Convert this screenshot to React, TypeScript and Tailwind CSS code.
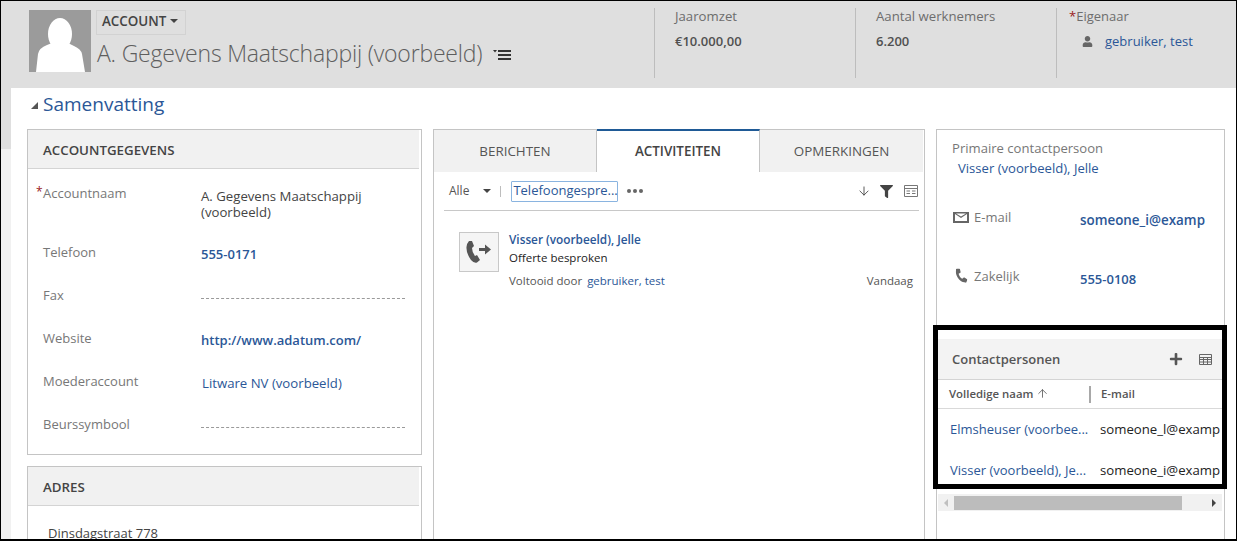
import { ArrowDown, ArrowUp } from 'lucide-react';
import { FaFilter, FaPhone, FaPlus, FaUser } from 'react-icons/fa';

const fields = [
  { label: 'Telefoon', value: '555-0171', kind: 'bold' },
  { label: 'Fax', value: '', kind: 'empty' },
  { label: 'Website', value: 'http://www.adatum.com/', kind: 'bold' },
  { label: 'Moederaccount', value: 'Litware NV (voorbeeld)', kind: 'link' },
  { label: 'Beurssymbool', value: '', kind: 'empty' },
];

function Caret({ className }: { className: string }) {
  return <span className={`inline-block w-0 h-0 border-x-[4px] border-x-transparent border-t-[4px] ${className}`} />;
}

function Stat({ label, value }: { label: string; value: string }) {
  return (
    <div className="w-[201px] h-[70px] border-l border-[#bdbdbd] pl-5 shrink-0">
      <div className="text-[13.2px] leading-[17px] text-[#6d6d6d]">{label}</div>
      <div className="text-[13px] leading-[17px] mt-2 font-semibold text-[#505050]">{value}</div>
    </div>
  );
}

export default function App() {
  return (
    <div className="relative w-[1237px] h-[541px] overflow-hidden border border-black border-b-2 bg-[#f1f1f1] font-['Open_Sans','Liberation_Sans',sans-serif]">
      {/* Kop */}
      <header className="h-[87px] bg-[#dfdfdf] flex pl-[28px] pt-[9px]">
        <div className="w-[62px] h-[62px] bg-[#9b9b9b] shrink-0 overflow-hidden">
          <svg viewBox="0 0 62 62" className="w-full h-full" fill="#ffffff">
            <ellipse cx="31" cy="24" rx="12" ry="16" />
            <path d="M7 62 L9 44 Q10 38 18 35 L23 33 Q31 44 39 33 L45 36 Q52 39 53 44 L56 62 Z" />
          </svg>
        </div>
        <div className="ml-[5px] w-[558px] shrink-0">
          <div className="w-[90px] h-[25px] pb-[2px] border border-[#d2d2d2] flex items-center pl-[5px] gap-[4px] text-[13.4px] font-semibold text-[#444444]">
            ACCOUNT <Caret className="border-t-[#444444] mb-[2px]" />
          </div>
          <div className="flex items-center mt-[2px] ml-[1px]">
            <span className="text-[23px] leading-[32px] font-light text-[#5e5e5e] whitespace-nowrap tracking-[-0.2px]">A. Gegevens Maatschappij (voorbeeld)</span>
            <svg viewBox="0 0 18 12" className="w-[18px] h-[12px] ml-[11px] mt-[3px]" fill="#333333">
              <path d="M0 1h4L2 3.5Z" />
              <rect x="5" y="1" width="13" height="2" />
              <rect x="5" y="5" width="13" height="2" />
              <rect x="5" y="9" width="13" height="2" />
            </svg>
          </div>
        </div>
        <div className="flex mt-[-2px]">
          <Stat label="Jaaromzet" value="€10.000,00" />
          <Stat label="Aantal werknemers" value="6.200" />
          <div className="w-[170px] h-[70px] border-l border-[#bdbdbd] pl-3">
            <div className="text-[13px] leading-[17px] text-[#6d6d6d]"><span className="text-[#9a1c1c]">*</span>Eigenaar</div>
            <div className="flex items-center mt-2 ml-[13px]">
              <FaUser size={11} className="text-[#666666]" />
              <span className="ml-[12px] text-[13px] leading-[17px] text-[#2b5797]">gebruiker, test</span>
            </div>
          </div>
        </div>
      </header>

      <main className="relative ml-[10px] h-[452px] bg-white pl-[16px]">
        <div className="flex items-center h-[32px] pb-[1px] ml-[4px]">
          <span className="w-0 h-0 border-l-[7px] border-l-transparent border-b-[7px] border-b-[#555555] mt-[3px]" />
          <h1 className="ml-[5px] text-[19px] leading-[28px] text-[#2b5797]">Samenvatting</h1>
        </div>

        <div className="flex mt-[9px]">
          {/* Linkerkolom */}
          <div className="w-[395px] shrink-0">
            <section className="h-[326px] border border-[#c4c4c4]">
              <div className="h-[39px] bg-[#f1f1f1] border-b border-[#d4d4d4] mr-[2px] pl-[15px] pt-[3px] flex items-center text-[13.3px] font-semibold text-[#444444]">ACCOUNTGEGEVENS</div>
              <div className="relative flex h-[50px] pt-[16px] pl-[15px]">
                <span className="absolute left-[8px] top-[14px] text-[12px] text-[#9a1c1c]">*</span>
                <span className="w-[158px] shrink-0 text-[13px] leading-[17px] text-[#777777]">Accountnaam</span>
                <span className="w-[190px] mt-[3px] text-[13.2px] leading-[16px] text-[#444444]">A. Gegevens Maatschappij (voorbeeld)</span>
              </div>
              <div className="pt-[15px]">
                {fields.map(f => (
                  <div key={f.label} className="flex h-[43px] pl-[15px] pt-[10px]">
                    <span className="w-[158px] shrink-0 text-[13px] leading-[17px] text-[#777777]">{f.label}</span>
                    {f.kind === 'empty' && <span className="w-[204px] h-[12px] border-b border-dashed border-[#9a9a9a]" />}
                    {f.kind === 'bold' && <span className="mt-[2px] text-[13px] leading-[17px] font-semibold text-[#2b5797]">{f.value}</span>}
                    {f.kind === 'link' && <span className="mt-[2px] ml-[1px] text-[13.2px] leading-[17px] text-[#2b5797]">{f.value}</span>}
                  </div>
                ))}
              </div>
            </section>
            <section className="mt-[11px] h-[100px] border border-[#c4c4c4]">
              <div className="h-[39px] bg-[#f1f1f1] border-b border-[#d4d4d4] mr-[2px] pl-[15px] pt-[3px] flex items-center text-[13.3px] font-semibold text-[#444444]">ADRES</div>
              <div className="mt-[19px] ml-[20px] text-[13px] leading-[17px] text-[#444444]">Dinsdagstraat 778</div>
            </section>
          </div>

          {/* Middenkolom */}
          <section className="ml-[11px] w-[492px] h-[420px] shrink-0 border border-[#c4c4c4]">
            <div className="flex h-[42px] bg-[#f1f1f1] mr-[1px] text-[13.4px] text-[#555555]">
              <div className="w-[163px] border-r border-[#c4c4c4] flex items-center justify-center">BERICHTEN</div>
              <div className="w-[163px] -mt-px h-[43px] bg-white border-t-[2px] border-t-[#1f5a96] border-r border-r-[#c4c4c4] flex items-center justify-center font-semibold text-[#444444]">ACTIVITEITEN</div>
              <div className="flex-1 flex items-center justify-center">OPMERKINGEN</div>
            </div>
            <div className="ml-[10px] mr-[5px] h-[39px] border-b border-[#c8c8c8] flex items-center">
              <span className="ml-[5px] text-[12px] text-[#555555]">Alle</span>
              <Caret className="ml-[14px] border-t-[#444444] border-x-[3px] border-t-[3px]" />
              <span className="ml-[9px] w-px h-[11px] bg-[#bdbdbd]" />
              <span className="ml-[10px] w-[107px] h-[21px] border border-[#8ab4e0] rounded-[1px] text-[13px] leading-[16px] text-[#2b5797] whitespace-nowrap overflow-hidden pl-px">Telefoongespre...</span>
              <span className="ml-[9px] flex gap-[2px]">
                <span className="w-[4px] h-[4px] rounded-full bg-[#666666]" />
                <span className="w-[4px] h-[4px] rounded-full bg-[#666666]" />
                <span className="w-[4px] h-[4px] rounded-full bg-[#666666]" />
              </span>
              <ArrowDown size={14} strokeWidth={1.5} className="ml-auto text-[#444444]" />
              <FaFilter size={13} className="ml-[9px] text-[#444444]" />
              <svg viewBox="0 0 14 12" className="ml-[11px] mr-[1px] w-[14px] h-[12px]" fill="none" stroke="#777777">
                <path d="M.5.5h13v11H.5ZM.5 3.5h13M2.5 6h3.5M8 6h3.5M2.5 8.5h3.5M8 8.5h3.5" />
              </svg>
            </div>
            <div className="flex mt-[20px] ml-[25px] mr-[11px]">
              <div className="w-[40px] h-[40px] mt-px bg-[#f5f5f5] border border-[#c8c8c8] flex items-center justify-center text-[#555555] shrink-0">
                <svg viewBox="0 0 26 23" className="w-[26px] h-[23px]" fill="currentColor">
                  <path d="M3 0 L6 0 L8 5 L6 7 Q6 11 9 15 L11 14 L14 19 L11 21.5 Q8 22.5 5 19 Q0 12 0.5 6 Q1 2 3 0 Z" />
                  <path d="M13 7h6V3.5L25 8.5l-6 5V10h-6z" />
                </svg>
              </div>
              <div className="ml-[10px] flex-1">
                <div className="text-[11.8px] leading-[16px] font-semibold text-[#2b5797]">Visser (voorbeeld), Jelle</div>
                <div className="mt-[3px] text-[11.5px] leading-[16px] text-[#222222]">Offerte besproken</div>
                <div className="mt-[7px] flex text-[11.5px] leading-[16px]">
                  <span className="text-[#555555]">Voltooid door</span>
                  <span className="ml-[5px] text-[#2b5797]">gebruiker, test</span>
                  <span className="ml-auto text-[#555555]">Vandaag</span>
                </div>
              </div>
            </div>
          </section>

          {/* Rechterkolom */}
          <section className="ml-[11px] w-[289px] h-[420px] shrink-0 border border-[#c4c4c4]">
            <div className="pl-[15px] pt-[10px] h-[70px]">
              <div className="text-[13.1px] leading-[17px] text-[#777777]">Primaire contactpersoon</div>
              <div className="mt-[3px] ml-[6px] text-[13.1px] leading-[17px] text-[#2b5797]">Visser (voorbeeld), Jelle</div>
            </div>
            <div className="flex h-[59px] pl-[16px]">
              <svg viewBox="0 0 16 11" className="w-[16px] h-[11px] mt-[12px]" fill="#666666">
                <path fillRule="evenodd" d="M0 0h16v11H0Zm2 2v7h12V2l-6 4Zm1-.5L8 4.5l5-3Z" />
              </svg>
              <span className="ml-[5px] w-[106px] mt-[9px] text-[13px] leading-[17px] text-[#777777]">E-mail</span>
              <span className="mt-[12px] text-[13.4px] leading-[17px] font-semibold text-[#2b5797]">someone_i@examp</span>
            </div>
            <div className="flex h-[59px] pl-[18px]">
              <FaPhone size={13} className="mt-[10px] text-[#666666] -scale-x-100 rotate-[10deg]" />
              <span className="ml-[6px] w-[106px] mt-[9px] text-[13px] leading-[17px] text-[#777777]">Zakelijk</span>
              <span className="mt-[12px] text-[13px] leading-[17px] font-semibold text-[#2b5797]">555-0108</span>
            </div>

            <div className="mt-[21px] mx-[1px] w-[284px]">
              <div className="h-[41px] bg-[#f3f3f3] border-b border-[#d4d4d4] flex items-center pl-[14px]">
                <span className="mt-[1px] text-[13px] font-semibold text-[#555555]">Contactpersonen</span>
                <FaPlus size={14} className="ml-auto text-[#555555]" />
                <svg viewBox="0 0 13 11" className="ml-[16px] mr-[10px] w-[13px] h-[11px]" fill="none" stroke="#666666">
                  <path d="M.5.5h12v10H.5ZM.5 3.5h12M.5 5.5h12M.5 8h12M4.5 3.5v7M8.5 3.5v7" />
                </svg>
              </div>
              <div className="h-[29px] border-b border-[#d9d9d9] flex items-center text-[11.4px] font-semibold text-[#555555]">
                <span className="ml-[11px] w-[140px] flex items-center gap-[3px] shrink-0">Volledige naam <ArrowUp size={13} strokeWidth={1.5} /></span>
                <span className="w-[2px] h-[17px] bg-[#a8a8a8]" />
                <span className="ml-[10px]">E-mail</span>
              </div>
              <div className="h-[41px] pt-[1px] flex items-center text-[13px] overflow-hidden whitespace-nowrap">
                <span className="ml-[12px] w-[150px] shrink-0 text-[#2b5797]">Elmsheuser (voorbee...</span>
                <span className="text-[13.2px] text-[#222222]">someone_l@examp</span>
              </div>
              <div className="h-[41px] pt-[1px] flex items-center text-[13px] overflow-hidden whitespace-nowrap">
                <span className="ml-[12px] w-[150px] shrink-0 text-[#2b5797]">Visser (voorbeeld), Je...</span>
                <span className="text-[13.2px] text-[#222222]">someone_i@examp</span>
              </div>
              <div className="mt-[3px] h-[17px] bg-[#f1f1f1] flex items-center px-[6px]">
                <span className="w-0 h-0 border-y-[4px] border-y-transparent border-r-[4px] border-r-[#c0c0c0]" />
                <span className="ml-[6px] w-[228px] h-[14px] bg-[#bcbcbc]" />
                <span className="ml-auto w-0 h-0 border-y-[4px] border-y-transparent border-l-[4px] border-l-[#444444]" />
              </div>
            </div>
          </section>
        </div>
      </main>

      {/* linkerrand boven de lichtgrijze strook */}
      <div className="absolute left-0 top-[87px] w-[10px] h-[61px] bg-[#dfdfdf]" />
      {/* markering om de contactpersonen */}
      <div className="absolute left-[932px] top-[324px] w-[294px] h-[164px] border-[5px] border-black pointer-events-none" />
    </div>
  );
}
